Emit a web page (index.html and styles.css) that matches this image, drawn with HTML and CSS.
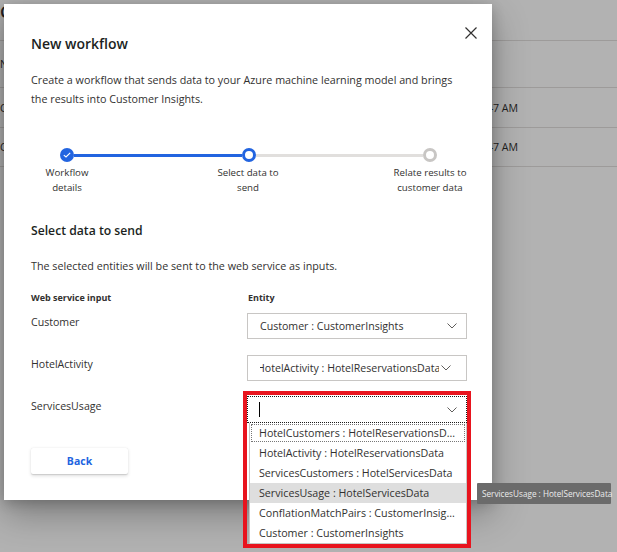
FILE: index.html
```html
<!DOCTYPE html>
<html lang="en">
<head>
<meta charset="utf-8">
<title>New workflow</title>
<link rel="stylesheet" href="styles.css">
</head>
<body>
<div class="page">
  <div class="page-header"><span class="page-title">C</span></div>
  <div class="row row-head"><span class="cell-left">N</span></div>
  <div class="row"><span class="cell-left">C</span><span class="cell-date">10:47 AM</span></div>
  <div class="row"><span class="cell-left">C</span><span class="cell-date">10:47 AM</span></div>
</div>
<div class="overlay"></div>

<div class="dialog" role="dialog">
  <button class="close" aria-label="Close">
    <svg width="12" height="12" viewBox="0 0 12 12"><path d="M0.5 0.5 L11.5 11.5 M11.5 0.5 L0.5 11.5" stroke="#323130" stroke-width="1.2" fill="none"/></svg>
  </button>
  <h1 class="title">New workflow</h1>
  <p class="intro">Create a workflow that sends data to your Azure machine learning model and brings<br>the results into Customer Insights.</p>

  <div class="stepper">
    <div class="track">
      <span class="dot dot-done"><svg width="8" height="6" viewBox="0 0 8 6"><path d="M0.8 3.1 L3 5 L7.2 0.8" stroke="#fff" stroke-width="1.1" fill="none"/></svg></span>
      <span class="seg seg-done"></span>
      <span class="dot dot-current"></span>
      <span class="seg"></span>
      <span class="dot dot-todo"></span>
    </div>
    <div class="step-labels">
      <span>Workflow<br>details</span>
      <span>Select data to<br>send</span>
      <span>Relate results to<br>customer data</span>
    </div>
  </div>

  <h2 class="section-title">Select data to send</h2>
  <p class="section-desc">The selected entities will be sent to the web service as inputs.</p>

  <div class="mapping-head">
    <div class="col-head">Web service input</div>
    <div class="col-head">Entity</div>
  </div>
  <div class="mapping">
    <div class="field-label">Customer</div>
    <div class="select">
      <span class="select-text">Customer : CustomerInsights</span>
      <svg class="chev" width="10" height="6" viewBox="0 0 10 6"><path d="M0.5 0.5 L5 5 L9.5 0.5" stroke="#605e5c" stroke-width="1" fill="none"/></svg>
    </div>

    <div class="field-label">HotelActivity</div>
    <div class="select">
      <span class="select-text select-scrolled"><span>HotelActivity : HotelReservationsData</span></span>
      <svg class="chev chev-tight" width="10" height="6" viewBox="0 0 10 6"><path d="M0.5 0.5 L5 5 L9.5 0.5" stroke="#605e5c" stroke-width="1" fill="none"/></svg>
    </div>

    <div class="field-label">ServicesUsage</div>
    <div class="select-wrap">
      <div class="select select-focused">
        <span class="caret"></span>
        <svg class="chev" width="10" height="6" viewBox="0 0 10 6"><path d="M0.5 0.5 L5 5 L9.5 0.5" stroke="#605e5c" stroke-width="1" fill="none"/></svg>
      </div>
      <ul class="listbox">
        <li class="opt opt-focus">HotelCustomers : HotelReservationsD...</li>
        <li class="opt">HotelActivity : HotelReservationsData</li>
        <li class="opt">ServicesCustomers : HotelServicesData</li>
        <li class="opt opt-hover">ServicesUsage : HotelServicesData</li>
        <li class="opt">ConflationMatchPairs : CustomerInsig...</li>
        <li class="opt">Customer : CustomerInsights</li>
      </ul>
    </div>
  </div>

  <div class="footer">
    <button class="btn">Back</button>
  </div>
</div>

<div class="highlight"></div>
<div class="tooltip">ServicesUsage : HotelServicesData</div>
</body>
</html>
```

FILE: styles.css
```css
* { box-sizing: border-box; }
html, body { margin: 0; padding: 0; }
body {
  width: 617px;
  height: 552px;
  overflow: hidden;
  position: relative;
  background: #ffffff;
  font-family: "Open Sans", "Noto Sans", sans-serif;
  color: #323130;
}

/* background page */
.page { width: 617px; }
.page-header {
  height: 41px;
  border-bottom: 1px solid #e1dfdd;
  padding-top: 2px;
  font-size: 17px;
  font-weight: 600;
  line-height: 20px;
  white-space: nowrap;
}
.row {
  display: flex;
  align-items: center;
  height: 40px;
  border-bottom: 1px solid #e1dfdd;
  font-size: 10.6px;
  white-space: nowrap;
}
.row-head { height: 47px; }
.row:last-child { height: 39px; }
.cell-left { width: 430px; overflow: hidden; }
.cell-date { width: 88px; text-align: right; }

.overlay {
  position: absolute;
  inset: 0;
  background: rgba(0, 0, 0, 0.3);
}

/* dialog */
.dialog {
  position: absolute;
  left: 4px;
  top: 4px;
  width: 488px;
  background: #ffffff;
  padding: 28px 25px 26px 27px;
  box-shadow: 0 14px 34px rgba(0, 0, 0, 0.3), 0 3px 12px rgba(0, 0, 0, 0.2);
}
.close {
  position: absolute;
  top: 23px;
  right: 15px;
  width: 12px;
  height: 12px;
  padding: 0;
  border: 0;
  background: none;
  display: flex;
}
.title {
  margin: 0;
  font-size: 14px;
  font-weight: 600;
  line-height: 24px;
  color: #201f1e;
}
.intro {
  margin: 15px 0 0;
  font-size: 10.75px;
  line-height: 19px;
  white-space: nowrap;
}

/* stepper */
.stepper { margin-top: 39px; }
.track {
  display: flex;
  align-items: center;
  height: 14px;
  padding: 0 30px 0 29px;
}
.dot {
  width: 14px;
  height: 14px;
  border-radius: 50%;
  flex: none;
  display: flex;
  align-items: center;
  justify-content: center;
}
.dot-done { background: #2264e0; }
.dot-current { border: 3px solid #2264e0; background: #fff; }
.dot-todo { border: 3px solid #c8c6c4; background: #fff; }
.seg { flex: 1; height: 3px; background: #e1dfdd; }
.seg-done { background: #2264e0; }
.step-labels {
  display: grid;
  grid-template-columns: 72px 1fr 74px;
  margin-top: 3px;
  font-size: 9.7px;
  line-height: 15px;
  text-align: center;
  white-space: nowrap;
}
.step-labels span:last-child { margin-left: -20px; margin-right: -20px; }

.section-title {
  margin: 26px 0 0;
  font-size: 12.2px;
  font-weight: 600;
  line-height: 20px;
  color: #201f1e;
}
.section-desc {
  margin: 15px 0 0;
  font-size: 10.75px;
  line-height: 20px;
}

.mapping-head {
  display: grid;
  grid-template-columns: 217px 220px;
  margin-top: 14px;
  margin-bottom: 7px;
}
.col-head {
  font-size: 9px;
  font-weight: 700;
  line-height: 16px;
}
.mapping {
  display: grid;
  grid-template-columns: 216px 220px;
  row-gap: 16px;
}
.field-label {
  font-size: 10.6px;
  line-height: 18px;
}
.select {
  height: 26px;
  border: 1px solid #c8c6c4;
  background: #fff;
  display: flex;
  align-items: center;
  padding: 0 9px 0 12px;
  font-size: 10.6px;
  white-space: nowrap;
}
.select-text { flex: 1; overflow: hidden; }
.select-scrolled span { display: block; margin-left: -3px; }
.chev { flex: none; margin-left: 6px; }
.chev-tight { margin-left: 2px; margin-right: 6px; }

.select-wrap { position: relative; }
.select-focused {
  border: 1px dotted #1b1a19;
  margin-top: -1px;
  height: 27px;
  padding-left: 11px;
}
.caret {
  display: block;
  width: 1px;
  height: 15px;
  background: #000;
  margin-right: auto;
}
.listbox {
  position: absolute;
  left: 2px;
  right: 0;
  top: 100%;
  margin: 0;
  padding: 0;
  list-style: none;
  background: #fff;
  border: 1px solid #c8c6c4;
  border-top: 0;
  font-size: 10.7px;
  z-index: 2;
}
.opt {
  height: 20px;
  line-height: 20px;
  padding: 0 9px;
  white-space: nowrap;
  overflow: hidden;
  color: #323130;
}
.opt-focus { outline: 1px dotted #777; outline-offset: -2px; }
.opt-hover { background: #dedede; }

.footer { margin-top: 25px; display: flex; }
.btn {
  width: 97px;
  height: 26px;
  border: 0;
  border-radius: 2px;
  background: #fff;
  box-shadow: 0 1.6px 3.6px rgba(0, 0, 0, 0.13), 0 0.3px 0.9px rgba(0, 0, 0, 0.11);
  color: #2264e0;
  font-family: inherit;
  font-size: 10.5px;
  font-weight: 700;
  padding: 0;
}

/* annotation & tooltip */
.highlight {
  position: absolute;
  left: 243px;
  top: 391px;
  width: 228px;
  height: 157px;
  border: 4px solid #e8141e;
  z-index: 3;
}
.tooltip {
  position: absolute;
  left: 477px;
  top: 483px;
  width: 134px;
  height: 21px;
  background: #6b6b6b;
  color: #ececec;
  font-size: 8.2px;
  line-height: 21px;
  padding: 0 5px;
  white-space: nowrap;
  border-radius: 1px;
  z-index: 3;
}
```
